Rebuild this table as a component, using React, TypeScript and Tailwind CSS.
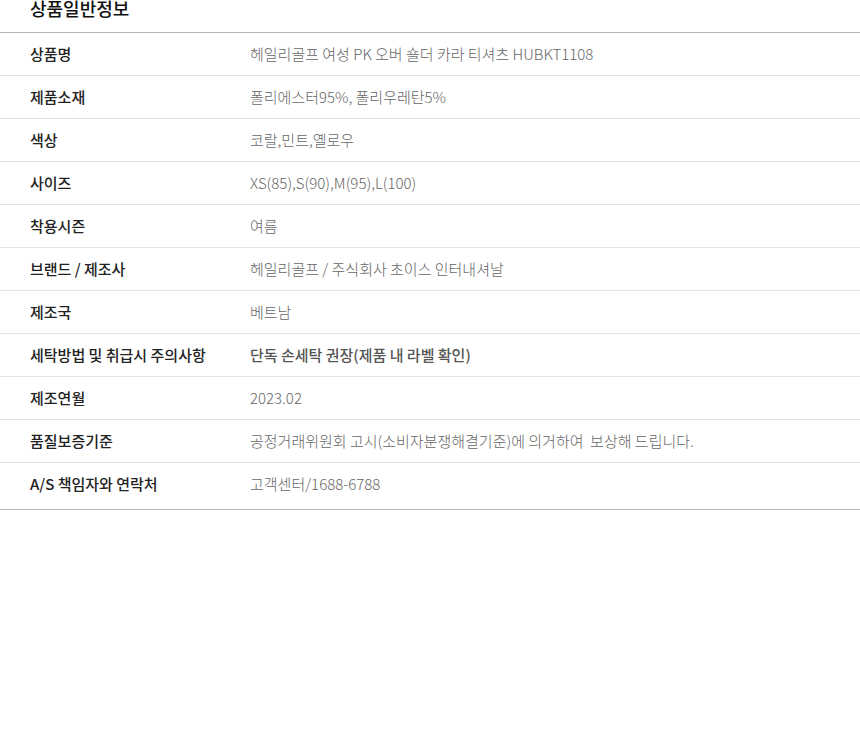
const rows: { label: string; value: string; strong?: boolean }[] = [
  { label: '상품명', value: '헤일리골프 여성 PK 오버 숄더 카라 티셔츠 HUBKT1108' },
  { label: '제품소재', value: '폴리에스터95%, 폴리우레탄5%' },
  { label: '색상', value: '코랄,민트,옐로우' },
  { label: '사이즈', value: 'XS(85),S(90),M(95),L(100)' },
  { label: '착용시즌', value: '여름' },
  { label: '브랜드 / 제조사', value: '헤일리골프 / 주식회사 초이스 인터내셔날' },
  { label: '제조국', value: '베트남' },
  { label: '세탁방법 및 취급시 주의사항', value: '단독 손세탁 권장(제품 내 라벨 확인)', strong: true },
  { label: '제조연월', value: '2023.02' },
  { label: '품질보증기준', value: '공정거래위원회 고시(소비자분쟁해결기준)에 의거하여  보상해 드립니다.' },
  { label: 'A/S 책임자와 연락처', value: '고객센터/1688-6788' },
];

export default function App() {
  return (
    <div
      className="w-[860px] h-[732px] bg-white overflow-hidden"
      style={{ fontFamily: '"Noto Sans CJK KR", "Noto Sans", sans-serif' }}
    >
      <div className="h-[32px] pl-[30px]">
        <h2 className="relative -top-[1px] text-[18px] leading-[18px] font-medium text-[#111]">상품일반정보</h2>
      </div>
      <div className="border-t border-b border-[#b5b5b5]">
        {rows.map((row, i) => (
          <div
            key={row.label}
            className={
              i === rows.length - 1
                ? 'flex items-center h-[46px] pb-[4px]'
                : 'flex items-center h-[43px] border-b border-[#e2e2e2]'
            }
          >
            <div className="w-[250px] pl-[30px] text-[15px] text-[#222] font-medium">{row.label}</div>
            <div
              className={
                row.strong
                  ? 'text-[15px] text-[#555] font-medium whitespace-pre'
                  : 'text-[15px] text-[#666] font-light whitespace-pre'
              }
            >
              {row.value}
            </div>
          </div>
        ))}
      </div>
    </div>
  );
}
